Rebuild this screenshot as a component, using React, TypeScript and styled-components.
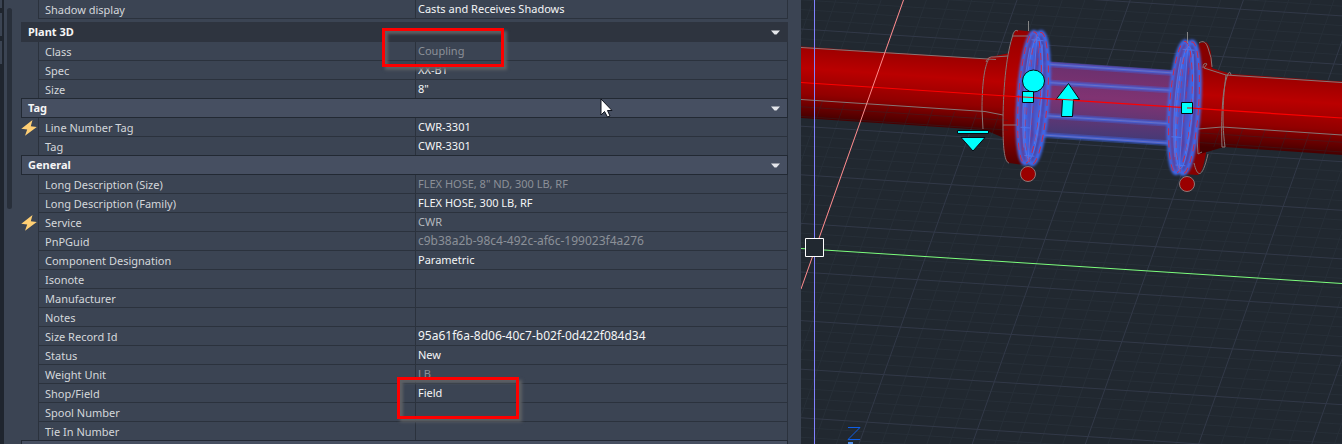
import React from "react";
import styled, { createGlobalStyle } from "styled-components";

const GlobalStyle = createGlobalStyle`
  * { box-sizing: border-box; }
  body {
    margin: 0;
    background: #212830;
    font-family: "Noto Sans", "Open Sans", sans-serif;
    font-size: 11px;
  }
`;

const Page = styled.main`
  display: grid;
  grid-template-columns: 4px minmax(0, 797fr) minmax(0, 541fr);
  grid-template-rows: minmax(0, 1fr);
  height: 100vh;
  overflow: hidden;
`;

const DockEdge = styled.div`
  display: flex;
  flex-direction: column;
  gap: 5px;
  background: #1f252e;
`;

const DockTab = styled.div<{ $height: number }>`
  width: 2px;
  height: ${(p) => p.$height}px;
  background: #3b4453;
`;

const Palette = styled.section`
  display: flex;
  align-items: flex-start;
  padding: 0 13px 0 3px;
  overflow: hidden;
  background: #3b4453;
`;

const ScrollThumb = styled.div`
  flex: none;
  width: 5px;
  height: 201px;
  margin: 8px 9px 0 0;
  border-radius: 3px;
  background: #282f3a;
`;

const Properties = styled.table`
  flex: 1;
  width: 0;
  table-layout: fixed;
  border-collapse: separate;
  border-spacing: 0;
`;

const IconColumn = styled.col`
  width: 17px;
`;

const NameColumn = styled.col`
  width: 377px;
`;

const Section = styled.tbody`
  & > tr:last-child > * {
    height: 18px;
    border-bottom: 0;
  }
`;

const SpacerCell = styled.td`
  height: 3px;
  padding: 0;
`;

const HeaderCell = styled.th<{ $active?: boolean }>`
  position: relative;
  height: 20px;
  padding: 0;
  background: ${(p) => (p.$active ? "#2e343f" : "#464f61")};
  border: 1px solid ${(p) => (p.$active ? "#2e343f" : "#222933")};
`;

const HeaderButton = styled.button`
  display: flex;
  align-items: center;
  justify-content: space-between;
  width: 100%;
  height: 18px;
  padding: 0 6px;
  border: 0;
  background: none;
  color: #f5f5f5;
  font: 700 11px/18px "Noto Sans", "Open Sans", sans-serif;
`;

const Caret = styled.svg`
  width: 10px;
  height: 5px;
  fill: #e4e6ea;
`;

const IconCell = styled.td`
  height: 19px;
  padding: 0;
  line-height: 0;
`;

const NameCell = styled.th`
  height: 19px;
  padding: 1px 0 0 6px;
  border-left: 1px solid #2b323d;
  border-bottom: 1px solid #2b323d;
  color: #d4d7db;
  font-weight: 400;
  line-height: 16px;
  text-align: left;
  white-space: nowrap;
`;

const ValueCell = styled.td<{ $tone: Tone; $id?: boolean }>`
  position: relative;
  height: 19px;
  padding: 0 0 0 2px;
  border: 1px solid #2b323d;
  border-top: 0;
  color: ${(p) => ({ edit: "#f4f5f6", locked: "#8b9098", linked: "#b4b8be" })[p.$tone]};
  font-size: ${(p) => (p.$id ? 12 : 11)}px;
  line-height: 16px;
  white-space: nowrap;
`;

const Callout = styled.span<{ $top: number; $left: number; $height: number }>`
  position: absolute;
  z-index: 2;
  top: ${(p) => p.$top}px;
  left: ${(p) => p.$left}px;
  width: 122px;
  height: ${(p) => p.$height}px;
  border: 3px solid #fe0000;
  box-shadow: 3px 3px 3px #5d6064, inset 3px 3px 3px #5d6064;
  pointer-events: none;
`;

const Pointer = styled.svg`
  position: absolute;
  z-index: 3;
  top: -1px;
  left: 578px;
  width: 13px;
  height: 20px;
`;

const Viewport = styled.section`
  min-width: 0;
  background: #212830;
`;

const Model = styled.svg`
  display: block;
  width: 100%;
  height: 100%;
`;

type Tone = "edit" | "locked" | "linked";

interface Property {
  name: string;
  value?: string;
  tone?: Tone;
  bolt?: boolean;
  id?: boolean;
  callout?: { top: number; left: number; height: number };
}

const plant: Property[] = [
  { name: "Class", value: "Coupling", tone: "locked", callout: { top: -14, left: -34, height: 39 } },
  { name: "Spec", value: "XX-B1" },
  { name: "Size", value: '8"' },
];

const tag: Property[] = [
  { name: "Line Number Tag", value: "CWR-3301", bolt: true },
  { name: "Tag", value: "CWR-3301" },
];

const general: Property[] = [
  { name: "Long Description (Size)", value: 'FLEX HOSE, 8" ND, 300 LB, RF', tone: "locked" },
  { name: "Long Description (Family)", value: "FLEX HOSE, 300 LB, RF" },
  { name: "Service", value: "CWR", tone: "linked", bolt: true },
  { name: "PnPGuid", value: "c9b38a2b-98c4-492c-af6c-199023f4a276", tone: "locked", id: true },
  { name: "Component Designation", value: "Parametric" },
  { name: "Isonote" },
  { name: "Manufacturer" },
  { name: "Notes" },
  { name: "Size Record Id", value: "95a61f6a-8d06-40c7-b02f-0d422f084d34", id: true },
  { name: "Status", value: "New" },
  { name: "Weight Unit", value: "LB", tone: "locked" },
  { name: "Shop/Field", value: "Field", callout: { top: -7, left: -19, height: 42 } },
  { name: "Spool Number" },
  { name: "Tie In Number" },
];

function Bolt() {
  return (
    <svg width="16" height="16" viewBox="0 0 16 16" aria-hidden="true">
      <path d="M11.5 0 0.3 8.7 6.2 9.6 4 15.8 15.8 7 9.8 6.2Z" fill="#ffcf74" />
    </svg>
  );
}

function PropertyRow({ name, value, tone = "edit", bolt, id, callout }: Property) {
  return (
    <tr>
      <IconCell>{bolt && <Bolt />}</IconCell>
      <NameCell scope="row">{name}</NameCell>
      <ValueCell $tone={tone} $id={id}>
        {value}
        {callout && <Callout $top={callout.top} $left={callout.left} $height={callout.height} />}
      </ValueCell>
    </tr>
  );
}

function SectionHeader({ title, active, children }: { title: string; active?: boolean; children?: React.ReactNode }) {
  return (
    <tr>
      <HeaderCell colSpan={3} $active={active}>
        <HeaderButton type="button" aria-expanded="true">
          {title}
          <Caret viewBox="0 0 10 5" aria-hidden="true">
            <path d="M0 0.5H9L5.5 4.5H3.5Z" />
          </Caret>
        </HeaderButton>
        {children}
      </HeaderCell>
    </tr>
  );
}

function range(n: number) {
  return Array.from({ length: n }, (_, i) => i);
}

function Grid({ opacity = 1 }: { opacity?: number }) {
  const across = (step: number) => {
    const y = 29 - 48.6 * 2 + step * 9.72;
    return `M801 ${y}L1342 ${y + 35.5}`;
  };
  const along = (step: number) => {
    const x = 790.6 + step * 22.64;
    return `M${x} 0L${x - 158} 444`;
  };
  const minor = range(58).filter((i) => i % 5 !== 0);
  const major = range(58).filter((i) => i % 5 === 0);
  return (
    <g fill="none" opacity={opacity}>
      <path d={minor.map(across).join("") + minor.map(along).join("")} stroke="#272f38" />
      <path d={major.map(across).join("") + major.map(along).join("")} stroke="#323948" />
    </g>
  );
}

function BlueEdges({ d }: { d: string }) {
  return (
    <g fill="none">
      <path d={d} stroke="#3f63e6" strokeWidth="6" opacity="0.4" />
      <path d={d} stroke="#4169e4" strokeWidth="3" opacity="0.6" />
      <path d={d} stroke="#8a83c4" strokeWidth="1" opacity="0.5" />
    </g>
  );
}

function SelectedDisc({ x, y }: { x: number; y: number }) {
  return (
    <g transform={`translate(${x} ${y}) rotate(4)`} fill="none">
      <ellipse cx="-3" rx="11" ry="66" fill="#6a3580" />
      <ellipse cx="4" rx="11" ry="66" fill="#573c9c" fillOpacity="0.85" />
      <g stroke="#3f66e6" filter="url(#glow)">
        <ellipse cx="-3" rx="11" ry="66" strokeWidth="4" />
        <ellipse cx="4" rx="11" ry="66" strokeWidth="5" />
        <ellipse cx="1" rx="6" ry="60" strokeWidth="3" opacity="0.8" />
        <path d="M7 -40C2 -20 2 20 6 40M-1 -62V62" strokeWidth="3" opacity="0.7" />
      </g>
      <g stroke="#d12943" strokeWidth="1" strokeDasharray="7 5">
        <ellipse cx="-3" rx="11" ry="66" />
        <ellipse cx="4" rx="11" ry="66" />
        <path d="M-3 -50L-6 54M3 -52L0 50" strokeOpacity="0.5" />
      </g>
      <g stroke="#527af2" strokeWidth="1" opacity="0.8">
        <ellipse cx="1" rx="8" ry="61" />
        <path d="M0 -64V64M-6 -50C-10 -20 -10 20 -5 50M6 -54C10 -20 10 20 5 46M-10 30H0M-5 -58H7M-4 58H6" />
      </g>
    </g>
  );
}

function PipeModel() {
  return (
    <Model viewBox="801 0 541 444" preserveAspectRatio="xMinYMin slice" role="img" aria-label="3D pipe with a selected coupling">
      <defs>
        <filter id="glow" x="-40%" y="-10%" width="180%" height="120%">
          <feGaussianBlur stdDeviation="0.8" />
        </filter>
        <linearGradient id="pipe" gradientUnits="userSpaceOnUse" x1="900" y1="53" x2="895" y2="125">
          <stop offset="0" stopColor="#9c0000" />
          <stop offset="0.3" stopColor="#ba0000" />
          <stop offset="0.65" stopColor="#920000" />
          <stop offset="1" stopColor="#430000" />
        </linearGradient>
        <linearGradient id="pipeRight" gradientUnits="userSpaceOnUse" x1="1285" y1="78" x2="1280" y2="152">
          <stop offset="0" stopColor="#9c0000" />
          <stop offset="0.3" stopColor="#ba0000" />
          <stop offset="0.65" stopColor="#920000" />
          <stop offset="1" stopColor="#430000" />
        </linearGradient>
        <linearGradient id="flange" x1="0" y1="0" x2="0" y2="1">
          <stop offset="0" stopColor="#950000" />
          <stop offset="0.4" stopColor="#bb0000" />
          <stop offset="0.75" stopColor="#8d0000" />
          <stop offset="1" stopColor="#520000" />
        </linearGradient>
        <linearGradient id="coupling" gradientUnits="userSpaceOnUse" x1="1110" y1="65" x2="1105" y2="140">
          <stop offset="0" stopColor="#69306e" />
          <stop offset="0.45" stopColor="#803372" />
          <stop offset="1" stopColor="#413a76" />
        </linearGradient>
        <clipPath id="pipeShade">
          <path d="M801 99L1008 116V139L801 119ZM1196 126L1342 134V155L1196 146Z" />
        </clipPath>
      </defs>

      <Grid />

      <path d="M801 46.5L985 59L990 57L1010 53L1004 138L985 130L801 118Z" fill="url(#pipe)" />
      <path d="M1017 30L1034 32L1024 165L1009 163C1003 161 1002 135 1003 124C1004 92 1009 30 1017 30Z" fill="url(#flange)" />
      <path d="M1199 43L1206 42C1211 45 1212 57 1212 68L1206 153C1204 165 1201 176 1197 175L1184 174Z" fill="#860000" />
      <path d="M1199 66L1205 66L1231 74L1342 81.5V155L1224 147L1200 154Z" fill="url(#pipeRight)" />
      <g clipPath="url(#pipeShade)">
        <Grid opacity={0.35} />
      </g>

      <g fill="none" stroke="#877676" strokeWidth="1">
        <path d="M801 47.5L996 59.5M801 99.5L985 111.5L1003 115M1003 125H1021" />
        <path d="M989 59C984 66 982 87 982 110L983 129M986 62Q988 56 994 57L1008 56" />
        <path d="M1018 31Q1014 28 1012 38C1006 57 1003 91 1003 124C1003 145 1004 162 1009 163M1013 36H1028" />
        <path d="M1199 43C1203 40 1206 42 1208 48Q1212 58 1212 67M1208 154C1203 176 1198 180 1194 163" />
        <path d="M1203 68Q1203 62 1207 64L1204 68L1226 75L1342 82.5M1231 75Q1230 70 1228 74C1222 88 1221 121 1222 147H1225C1221 117 1224 90 1226 75" />
        <path d="M1198 129L1222 127L1342 135M1196 122L1198 154L1202 152" />
      </g>

      <path d="M1038 61L1182 71L1173 145L1034 135Z" fill="url(#coupling)" />
      <BlueEdges d="M1037 63.500L1181 73.500M1040 82L1181 91M1034 115L1174 124M1035 134.500L1174 143.500" />
      <SelectedDisc x={1032.5} y={98} />
      <SelectedDisc x={1183.5} y={107.5} />

      <path d="M801 82.5L1342 118" stroke="#fe0000" strokeWidth="1.2" />
      <path d="M1028.5 21V31M1187.5 32V43" stroke="#858585" />
      <g fill="#9a0000" stroke="#8f7777">
        <circle cx="1028" cy="174" r="7.5" />
        <circle cx="1187" cy="184" r="7.5" />
      </g>

      <g fill="#00ffff" stroke="#050a12">
        <circle cx="1033.5" cy="81" r="11" />
        <path d="M1022.5 91.5H1033.5V102.5H1022.500ZM1181.5 102.5H1192.5V113.5H1181.5Z" />
        <path d="M1068.5 83.5L1079.5 99.5H1073.5L1072.5 116.5H1061.5L1062.5 99.5H1056Z" />
        <path d="M957.5 130.5H988.5V133.5H957.5ZM961 137.5H985L973 151Z" />
      </g>
      <path d="M1023 97L1033 97.5M1056 99L1080 100.5M1187 108H1192" stroke="#fe0000" />

      <g fill="none">
        <path d="M903.5 0L801 289" stroke="#ff8a8a" />
        <path d="M814.5 0V444" stroke="#8080fe" />
        <path d="M801 248.5L1342 283.5" stroke="#7dfe7d" />
        <path d="M805.5 238.5H823.5V256.5H805.5Z" fill="#212830" stroke="#fff" />
        <path d="M848 427.5H860L848 439.5H860" stroke="#0f5fe8" />
        <path d="M848 443H853" stroke="#4f8ee8" strokeWidth="2" />
      </g>
    </Model>
  );
}

export default function App() {
  return (
    <Page>
      <GlobalStyle />
      <DockEdge>
        <DockTab $height={8} />
        <DockTab $height={23} />
        <DockTab $height={23} />
      </DockEdge>
      <Palette aria-label="Properties">
        <ScrollThumb />
        <Properties>
          <colgroup>
            <IconColumn />
            <NameColumn />
            <col />
          </colgroup>
          <tbody>
            <PropertyRow name="Shadow display" value="Casts and Receives Shadows" />
            <tr>
              <SpacerCell colSpan={3} />
            </tr>
          </tbody>
          <Section>
            <SectionHeader title="Plant 3D" active />
            {plant.map((p) => (
              <PropertyRow key={p.name} {...p} />
            ))}
          </Section>
          <Section>
            <SectionHeader title="Tag">
              <Pointer viewBox="0 0 13 20" aria-hidden="true">
                <path d="M1 1V17L4.5 13.5L7.5 19L10 18L7.5 12.5H12Z" fill="#fff" stroke="#11151f" />
              </Pointer>
            </SectionHeader>
            {tag.map((p) => (
              <PropertyRow key={p.name} {...p} />
            ))}
          </Section>
          <Section>
            <SectionHeader title="General" />
            {general.map((p) => (
              <PropertyRow key={p.name} {...p} />
            ))}
          </Section>
          <tbody>
            <tr>
              <HeaderCell as="td" colSpan={3} />
            </tr>
          </tbody>
        </Properties>
      </Palette>
      <Viewport>
        <PipeModel />
      </Viewport>
    </Page>
  );
}
